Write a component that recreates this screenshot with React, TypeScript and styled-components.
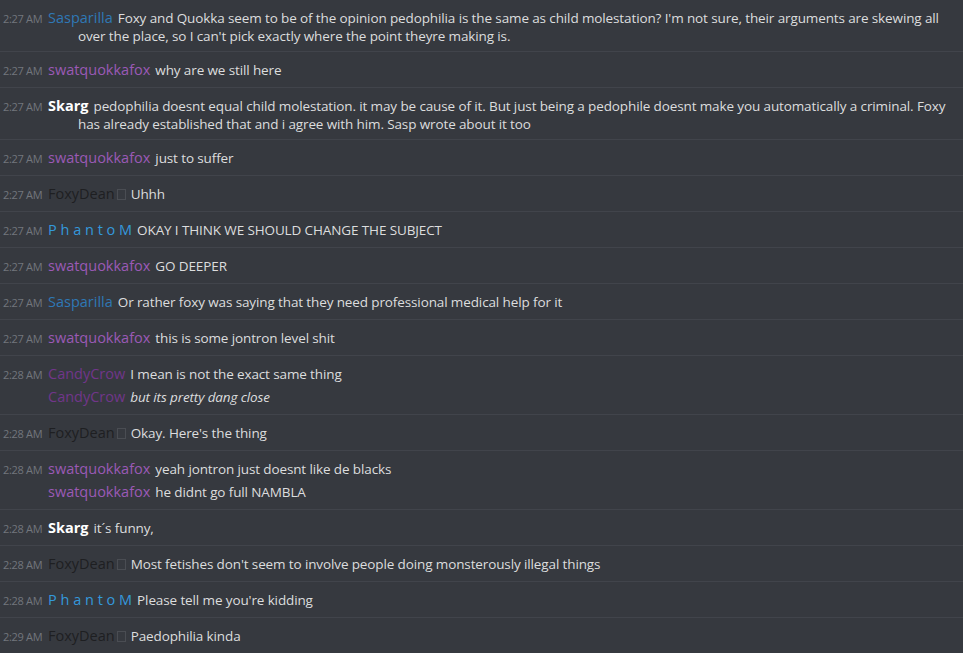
import styled, { createGlobalStyle } from "styled-components";

type Line = { text: string; italic?: boolean };

type Role = "blue" | "purple" | "white" | "black" | "phantom" | "crow";

type Entry = {
  time: string;
  author: string;
  kind: Role;
  lines: Line[];
};

const roleColors: Record<Role, string> = {
  blue: "#2f78b5",
  purple: "#9b59b6",
  white: "#ffffff",
  black: "#1e1f22",
  phantom: "#3498db",
  crow: "#71368a",
};

const GlobalStyle = createGlobalStyle`
  html, body {
    margin: 0;
    padding: 0;
    background: #36393f;
  }
  body {
    font-family: "Open Sans", "Noto Sans", sans-serif;
    -webkit-font-smoothing: antialiased;
  }
`;

const ChatLog = styled.div`
  width: 963px;
  height: 653px;
  overflow: hidden;
  background: #36393f;
`;

const Group = styled.div`
  display: flex;
  flex-direction: column;
  gap: 3px;
  padding: 9px 16px 6px 0;
  border-bottom: 1px solid #41444b;
`;

const Message = styled.div`
  min-height: 20px;
  padding-left: 78px;
  text-indent: -75px;
  font-size: 13.5px;
  letter-spacing: -0.12px;
  line-height: 18px;
  color: #dcddde;
`;

const Timestamp = styled.span`
  display: inline-block;
  width: 45px;
  text-indent: 0;
  font-size: 11px;
  line-height: 12px;
  letter-spacing: -0.3px;
  color: #72767d;
`;

const Author = styled.span<{ $role: Role }>`
  color: ${(p) => roleColors[p.$role]};
  font-size: 14.5px;
  letter-spacing: 0;
  font-weight: ${(p) => (p.$role === "white" ? 700 : p.$role === "purple" || p.$role === "phantom" ? 500 : 400)};
  margin-right: 5px;
`;

const Tofu = styled.span`
  display: inline-block;
  width: 7px;
  height: 9px;
  margin-left: 2px;
  border: 1px solid #4a4d53;
  vertical-align: -1px;
`;

const Content = styled.span<{ $italic?: boolean }>`
  font-style: ${(p) => (p.$italic ? "italic" : "normal")};
`;

const entries: Entry[] = [
  {
    time: "2:27 AM",
    author: "Sasparilla",
    kind: "blue",
    lines: [
      {
        text: "Foxy and Quokka seem to be of the opinion pedophilia is the same as child molestation? I'm not sure, their arguments are skewing all over the place, so I can't pick exactly where the point theyre making is.",
      },
    ],
  },
  { time: "2:27 AM", author: "swatquokkafox", kind: "purple", lines: [{ text: "why are we still here" }] },
  {
    time: "2:27 AM",
    author: "Skarg",
    kind: "white",
    lines: [
      {
        text: "pedophilia doesnt equal child molestation. it may be cause of it. But just being a pedophile doesnt make you automatically a criminal. Foxy has already established that and i agree with him. Sasp wrote about it too",
      },
    ],
  },
  { time: "2:27 AM", author: "swatquokkafox", kind: "purple", lines: [{ text: "just to suffer" }] },
  { time: "2:27 AM", author: "FoxyDean", kind: "black", lines: [{ text: "Uhhh" }] },
  { time: "2:27 AM", author: "P h a n t o M", kind: "phantom", lines: [{ text: "OKAY I THINK WE SHOULD CHANGE THE SUBJECT" }] },
  { time: "2:27 AM", author: "swatquokkafox", kind: "purple", lines: [{ text: "GO DEEPER" }] },
  {
    time: "2:27 AM",
    author: "Sasparilla",
    kind: "blue",
    lines: [{ text: "Or rather foxy was saying that they need professional medical help for it" }],
  },
  { time: "2:27 AM", author: "swatquokkafox", kind: "purple", lines: [{ text: "this is some jontron level shit" }] },
  {
    time: "2:28 AM",
    author: "CandyCrow",
    kind: "crow",
    lines: [{ text: "I mean is not the exact same thing" }, { text: "but its pretty dang close", italic: true }],
  },
  { time: "2:28 AM", author: "FoxyDean", kind: "black", lines: [{ text: "Okay. Here's the thing" }] },
  {
    time: "2:28 AM",
    author: "swatquokkafox",
    kind: "purple",
    lines: [{ text: "yeah jontron just doesnt like de blacks" }, { text: "he didnt go full NAMBLA" }],
  },
  { time: "2:28 AM", author: "Skarg", kind: "white", lines: [{ text: "it´s funny," }] },
  {
    time: "2:28 AM",
    author: "FoxyDean",
    kind: "black",
    lines: [{ text: "Most fetishes don't seem to involve people doing monsterously illegal things" }],
  },
  { time: "2:28 AM", author: "P h a n t o M", kind: "phantom", lines: [{ text: "Please tell me you're kidding" }] },
  { time: "2:29 AM", author: "FoxyDean", kind: "black", lines: [{ text: "Paedophilia kinda" }] },
];

export default function App() {
  return (
    <>
      <GlobalStyle />
      <ChatLog>
        {entries.map((entry, i) => (
          <Group key={i}>
            {entry.lines.map((line, j) => (
              <Message key={j}>
                <Timestamp>{j === 0 ? entry.time : ""}</Timestamp>
                <Author $role={entry.kind}>
                  {entry.author}
                  {entry.kind === "black" ? <Tofu /> : null}
                </Author>
                <Content $italic={line.italic}>{line.text}</Content>
              </Message>
            ))}
          </Group>
        ))}
      </ChatLog>
    </>
  );
}
